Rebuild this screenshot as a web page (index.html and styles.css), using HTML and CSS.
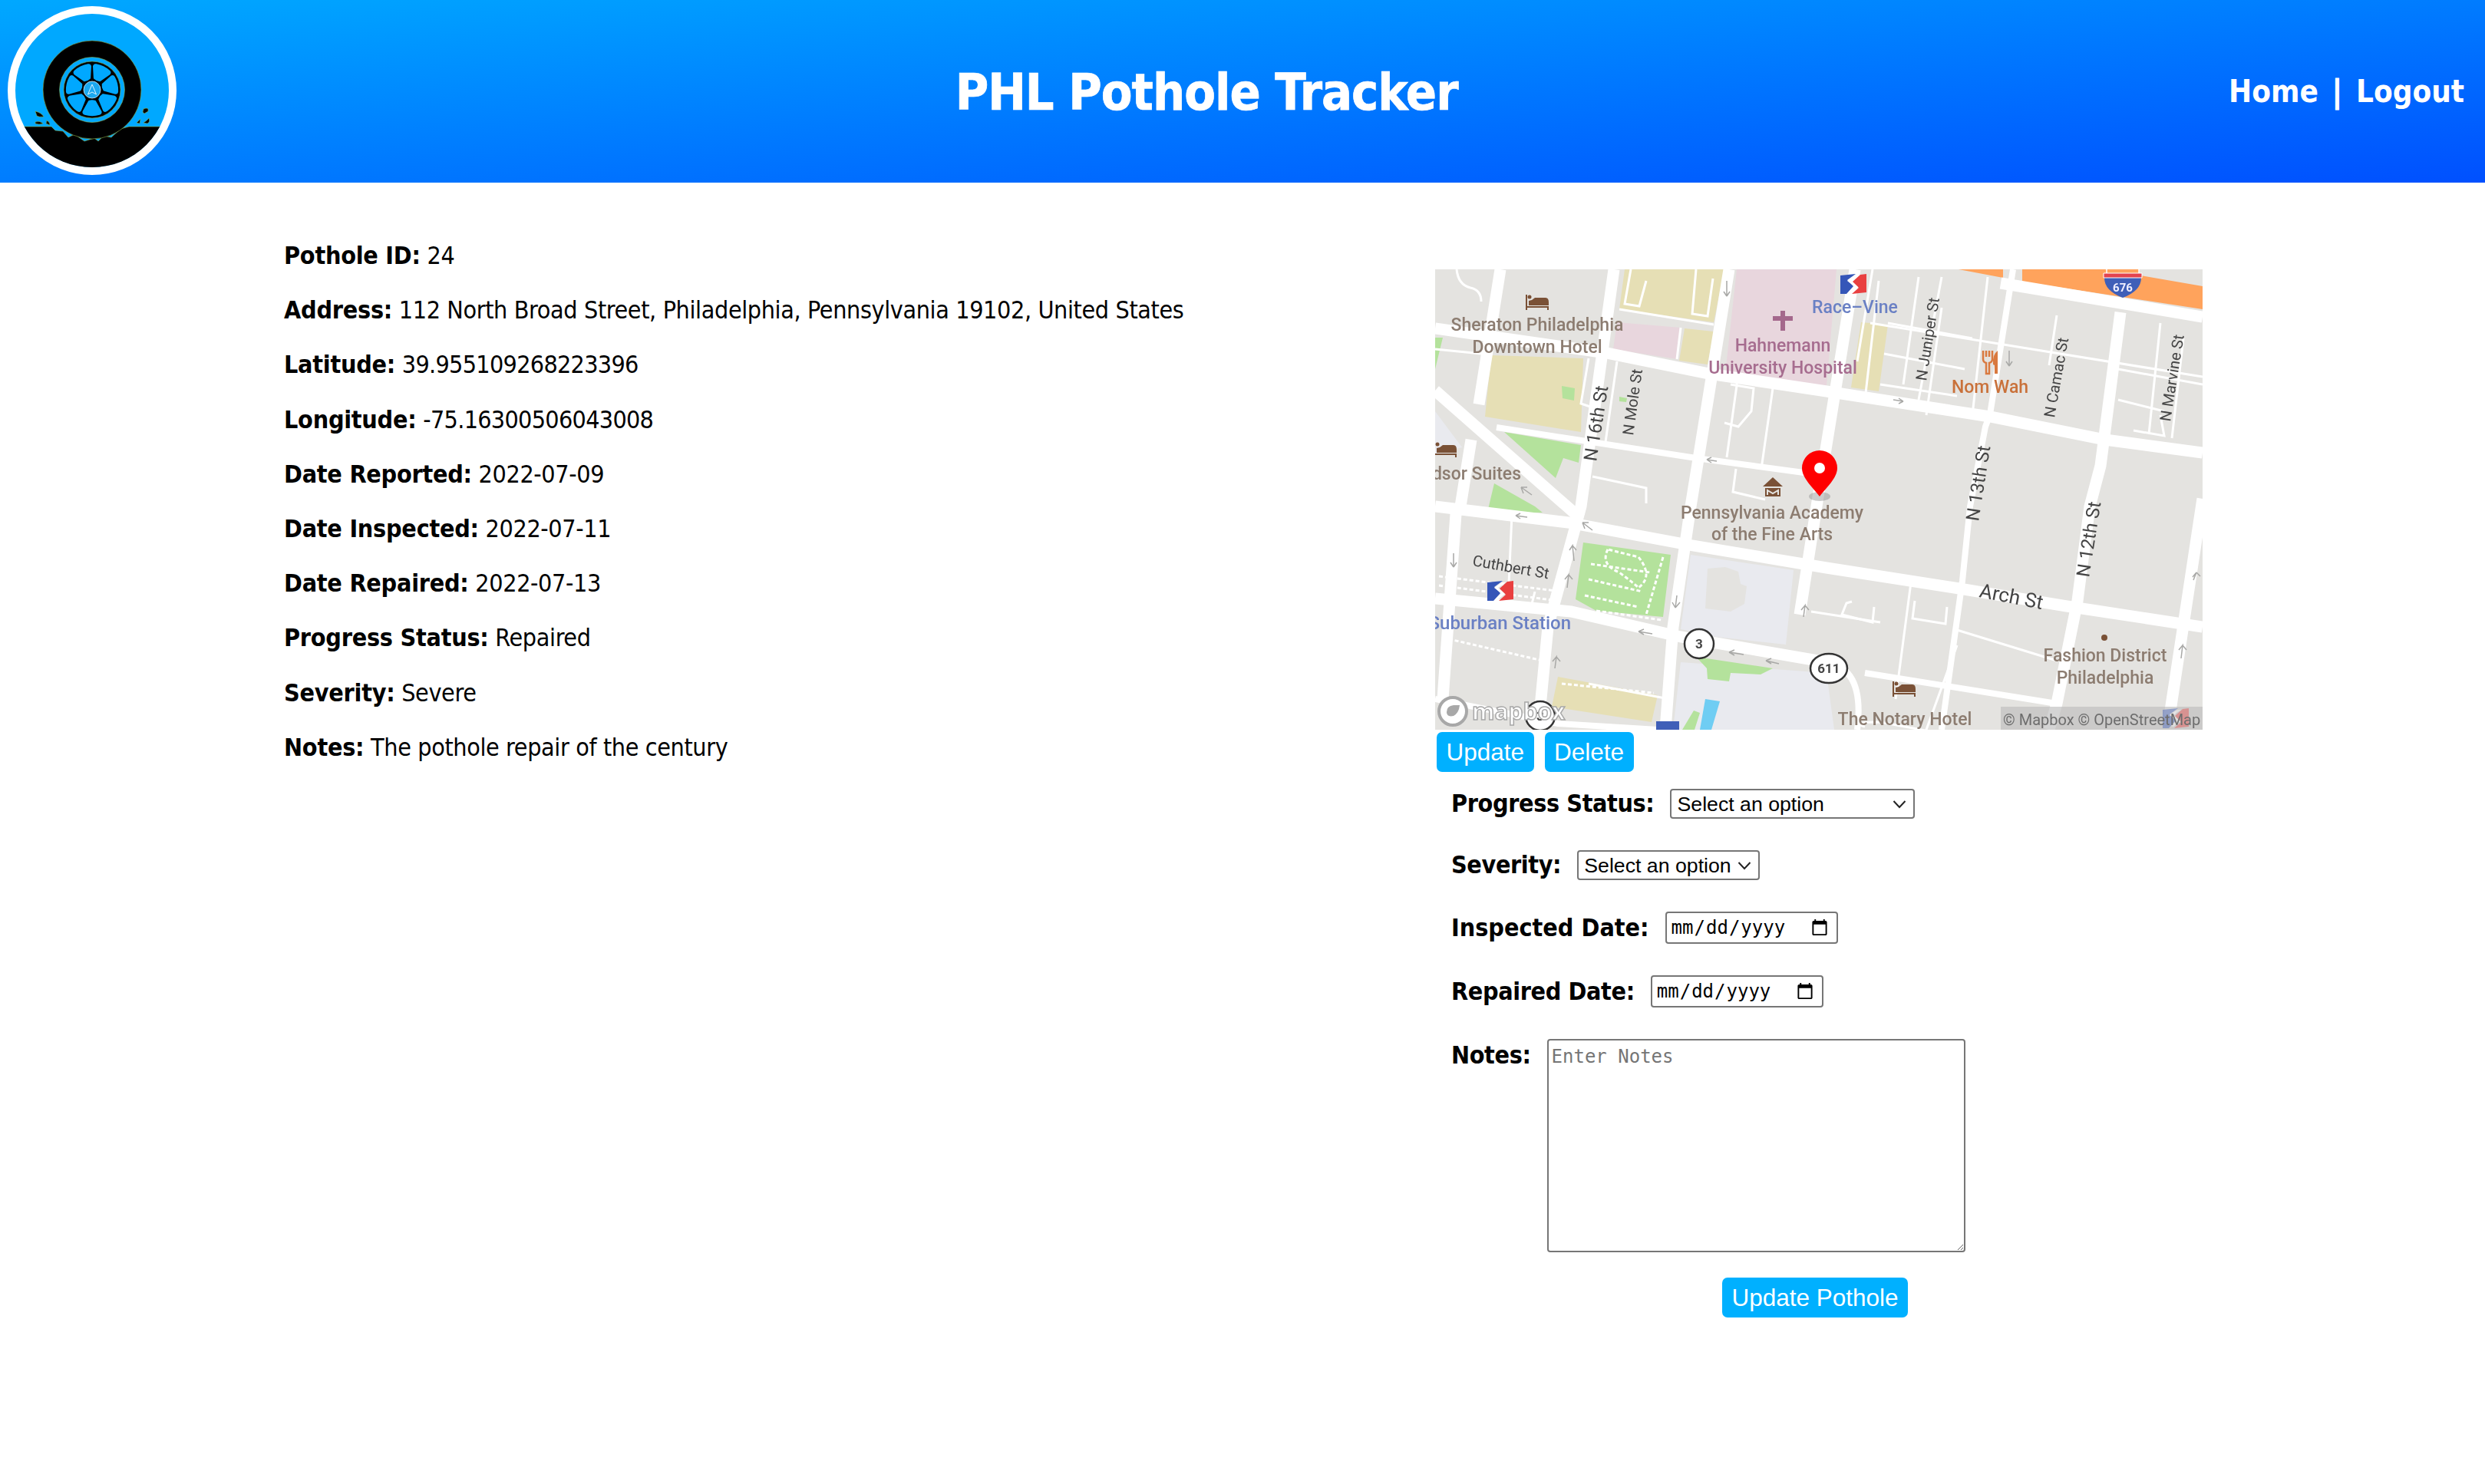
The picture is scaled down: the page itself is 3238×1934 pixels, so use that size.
FILE: index.html
```html
<!DOCTYPE html>
<html lang="en">
<head>
<meta charset="utf-8">
<title>PHL Pothole Tracker</title>
<link rel="stylesheet" href="styles.css">
</head>
<body>
<header class="site-header">
  <svg class="logo" viewBox="0 0 220 220" aria-label="logo">
    <defs>
      <clipPath id="logoClip"><circle cx="110" cy="110" r="100"/></clipPath>
      <path id="petal" d="M-4 15Q0 13.500 4 15L11.500 28.500Q12 31 9.500 31.800Q0 34.500-9.500 31.800Q-12 31-11.500 28.500Z"/>
    </defs>
    <circle cx="110" cy="110" r="105" class="logo-bg"/>
    <g clip-path="url(#logoClip)">
      <path class="logo-black" d="M0 157H57L62 162 72 163 79 171 87 167 100 176 113 172 118 176 125 169 135 171 147 160 158 157H220V220H0Z"/>
    </g>
    <circle cx="110" cy="109" r="64" class="logo-black"/>
    <circle cx="110" cy="109" r="42.500" class="logo-blue"/>
    <circle cx="110" cy="109" r="37" class="logo-black"/>
    <g class="logo-petal" transform="translate(110 109)">
      <use href="#petal"/><use href="#petal" transform="rotate(51.430)"/><use href="#petal" transform="rotate(102.860)"/><use href="#petal" transform="rotate(154.290)"/><use href="#petal" transform="rotate(205.710)"/><use href="#petal" transform="rotate(257.140)"/><use href="#petal" transform="rotate(308.570)"/>
    </g>
    <circle cx="110" cy="109" r="11" class="logo-hub"/>
    <path class="logo-arrow" d="M110 102L104.500 115 110 112 115.500 115Z"/>
    <g class="logo-black">
      <path d="M36 137Q44 139 47 144 41 145 38 143Z"/><path d="M36 151Q42 149 46 153 41 155 36 153Z"/><path d="M51 149Q55 151 55 155L50 153Z"/>
      <path d="M177 134Q184 131 183 137L178 140 176 138Z"/><path d="M168 152L173 147 172 153Z"/><path d="M177 152Q182 149 184 146 186 151 182 153Z"/>
    </g>
  </svg>
  <h1 class="site-title">PHL Pothole Tracker</h1>
  <nav class="site-nav"><a href="#">Home</a><span class="nav-sep">|</span><a href="#">Logout</a></nav>
</header>

<main class="page">
  <section class="details">
    <p><b>Pothole ID:</b> 24</p>
    <p><b>Address:</b> 112 North Broad Street, Philadelphia, Pennsylvania 19102, United States</p>
    <p><b>Latitude:</b> <span class="num">39.955109268223396</span></p>
    <p><b>Longitude:</b> <span class="num">-75.16300506043008</span></p>
    <p><b>Date Reported:</b> 2022-07-09</p>
    <p><b>Date Inspected:</b> 2022-07-11</p>
    <p><b>Date Repaired:</b> 2022-07-13</p>
    <p><b>Progress Status:</b> Repaired</p>
    <p><b>Severity:</b> Severe</p>
    <p><b>Notes:</b> The pothole repair of the century</p>
  </section>

  <section class="side">
    <svg class="map" viewBox="0 0 1000 600" aria-label="map">
      <defs>
        <g id="septa">
          <path class="septa-blue" d="M0 2L20 0 9 8 17 16 8 26 0 26Z"/>
          <path class="septa-red" d="M34 0V24L15 26 24 18 16 10 26 1Z"/>
          <path class="septa-white" d="M19 2L9 9 18 16 11 23 14 24 23 17 14 9 24 2Z"/>
        </g>
        <g id="bed">
          <path class="poi-line" d="M1 0V20M1 16H29V20"/>
          <circle cx="5" cy="3" r="2.500" class="poi-fill"/>
          <path class="poi-fill" d="M8 7L12 4H26Q30 4 30 10V14H4V8Z"/>
        </g>
      </defs>
      <rect class="land" width="1000" height="600"/>

      <!-- coloured areas -->
      <path class="tan" d="M73 112L193 116 190 212 65 192ZM247 0H377L363 69 240 52ZM325 77L363 81 355 124 318 119ZM555 69L590 72 578 159 542 154ZM160 531L290 555 282 590 152 570Z"/>
      <path class="pink" d="M237 69L320 76 315 117 232 104ZM393 0H523L510 151 377 145Z"/>
      <path class="motorway" d="M682 0H740V11ZM765 0H873L1000 22V52L765 16Z"/>
      <path class="green" d="M90 212L190 229 187 252 167 246 157 272ZM77 279L130 309 140 317H68ZM0 89L10 89 0 130ZM165 152L182 155 181 171 166 168ZM240 166L250 168 249 173 240 172ZM193 356L307 372 297 453 210 445 183 430Z"/>
      <path class="plaza" d="M333 372L467 392 457 489 367 479 320 469ZM320 512L510 526 520 600H310ZM0 185L35 232 0 240Z"/>
      <path class="land" d="M355 390L378 388 395 394 398 410 406 413 403 436 385 446 352 442Z"/>
      <path class="green" d="M340 505L440 520 424 528 385 526 383 537 355 534 354 520ZM322 600L337 575 345 578 338 600Z"/>
      <path class="water" d="M352 560L371 563 360 600H345Z"/>

      <!-- main roads -->
      <g class="road">
        <path d="M0 77L223 109 357 136 510 159 723 192 873 222 1000 239"/>
        <path d="M190 333L330 359 510 389 683 416 823 439 1000 466M0 309L190 332"/>
        <path d="M0 158L190 325"/>
        <path d="M233 0L190 309 147 466 137 570 130 600"/>
        <path d="M547 0L497 309 475 450"/>
        <path d="M383 0L333 309 310 466 300 600"/>
        <path d="M85 0L57 176M47 222L33 309 27 319 10 560"/>
        <path d="M893 56L867 256 853 309 837 432 810 566 800 600"/>
        <path d="M0 429L177 446 320 479 510 512"/>
        <path d="M1000 299L957 582"/>
        <path d="M737 18L1000 62"/>
      </g>
      <g class="road-mid">
        <path d="M80 206L340 246 510 269"/>
        <path d="M753 0L723 189 717 205 697 309 687 406 660 600"/>
        <path d="M560 526L810 566"/>
        <path d="M0 560L160 592 290 600"/>
        <path d="M510 512Q560 520 550 600"/>
      </g>
      <!-- alleys and lanes -->
      <g class="alley">
        <path d="M28 0Q30 20 46 24 60 27 60 42M0 104L60 110"/>
        <path d="M255 0L247 45 266 48 275 15M340 0L335 58 355 61 362 12"/>
        <path d="M240 52L363 72M320 76L315 117M200 116L190 175 205 180"/>
        <path d="M237 120L222 225M205 270L275 285 275 305"/>
        <path d="M395 137L380 245M377 200L395 205 412 185 415 155 385 150M392 260L388 290 430 300M440 155L425 260"/>
        <path d="M570 0L550 120 M578 15L560 170M567 70L1000 140"/>
        <path d="M590 70L700 90M585 110L690 130M580 150L680 165M660 10L630 170M630 10L610 150"/>
        <path d="M810 60L800 125M945 70L930 215M975 90L960 220M890 130L1000 150M890 170L950 185M910 210L950 217 945 190"/>
        <path d="M660 50L640 190M720 10L700 190"/>
        <path d="M543 433L536 435 530 450 570 460 572 440M625 432L622 455 665 462 667 440M620 408L600 560"/>
        <path d="M490 446L580 460M690 545L790 562M680 470L810 510"/>
        <path d="M680 490L640 600M560 596Q540 590 580 590L660 605"/>
        <path d="M100 320L96 410M130 420L125 440M200 540L305 560"/>
      </g>
      <g class="dash">
        <path d="M203 384L280 395 M200 404L270 420M195 425L265 440M210 445L295 457"/>
        <path d="M225 365Q215 385 240 395 260 410 265 415 285 400 265 375 245 370 225 365"/>
        <path d="M297 375L275 450M10 480L140 510M5 400L165 420M5 412L160 432M5 425L160 445"/>
        <path d="M165 540L285 552"/>
      </g>

      <!-- one-way arrows -->
      <g class="arrow">
        <path d="M380 35V15M380 35L376 29M380 35L384 29M112 284L126 294M112 284H120M112 284L115 292M354 248L367 250M354 248L360 245M354 248L360 252M597 170L610 172M610 172L604 168M610 172L604 175M748 106V126M748 126L744 120M748 126L752 120"/>
        <path d="M105 321L120 323M105 321L111 318M105 321L111 325M192 330L205 340M192 330H200M192 330L195 338M181 380L179 360 175 366M179 360L184 366M172 415L174 398 169 404M174 398L179 404M24 380V370M24 388V372M24 388L20 382M24 388L28 382M265 472L283 475M265 472L272 469M265 472L272 476M313 441L315 425M313 441L309 434M313 441L319 434M156 520L158 505 153 511M158 505L163 511M383 499L402 502M383 499L390 496M383 499L390 503M431 510L448 514M431 510L438 507M431 510L438 514M480 453L482 438 477 444M482 438L487 444M988 405L992 395 987 401M992 395L997 400M972 507L974 490 969 496M974 490L979 496"/>
      </g>

      <!-- point icons -->
      <use href="#bed" transform="translate(118 33)"/>
      <use href="#bed" transform="translate(-2 225)"/>
      <use href="#bed" transform="translate(596 537)"/>
      <use href="#septa" transform="translate(528 6)"/>
      <use href="#septa" transform="translate(68 406)"/>
      <path class="cross" d="M440 64H466M453 54V80"/>
      <g class="museum">
        <path d="M427 283L440 271 453 283ZM430 285H450V296H430Z"/>
        <path class="museum-m" d="M433 294V288L440 292 447 288V294"/>
      </g>
      <path class="food" d="M714 106V117Q714 121 718 122L718 136H722L722 122Q726 121 726 117V106M718 106V114M722 106V114"/>
      <path class="food-fill" d="M733 106Q726 111 727 124L729 125V136H733Z"/>
      <circle class="poi-fill" cx="872" cy="480" r="4"/>
      <path class="parking" d="M288 589H318V600H288Z"/>

      <!-- labels -->
      <g class="lbl lbl-poi">
        <text x="133" y="80">Sheraton Philadelphia</text>
        <text x="133" y="109">Downtown Hotel</text>
        <text x="439" y="325">Pennsylvania Academy</text>
        <text x="439" y="353">of the Fine Arts</text>
        <text x="612" y="594">The Notary Hotel</text>
        <text x="873" y="511">Fashion District</text>
        <text x="873" y="540">Philadelphia</text>
        <text class="lbl-end" x="112" y="274">Windsor Suites</text>
      </g>
      <g class="lbl lbl-health">
        <text x="453" y="107">Hahnemann</text>
        <text x="453" y="136">University Hospital</text>
      </g>
      <g class="lbl lbl-transit">
        <text x="547" y="57">Race–Vine</text>
        <text class="lbl-end lbl-station" x="177" y="469">Suburban Station</text>
      </g>
      <text class="lbl lbl-food" x="723" y="161">Nom Wah</text>
      <g class="street">
        <text transform="translate(210 251) rotate(-81)" class="street-lg">N 16th St</text>
        <text transform="translate(258 217) rotate(-82)">N Mole St</text>
        <text transform="translate(640 146) rotate(-81)">N Juniper St</text>
        <text transform="translate(807 194) rotate(-80)">N Camac St</text>
        <text transform="translate(958 199) rotate(-81)">N Marvine St</text>
        <text transform="translate(708 329) rotate(-81)" class="street-lg">N 13th St</text>
        <text transform="translate(852 402) rotate(-81)" class="street-lg">N 12th St</text>
        <text transform="translate(708 427) rotate(11)" class="street-xl">Arch St</text>
        <text transform="translate(48 386) rotate(10)">Cuthbert St</text>
      </g>

      <!-- route shields -->
      <g class="shield">
        <circle cx="344" cy="488" r="19"/>
        <circle cx="137" cy="582" r="19"/>
        <ellipse cx="513" cy="520" rx="24" ry="19"/>
      </g>
      <g class="shield-text">
        <text x="344" y="494">3</text>
        <text x="137" y="588">3</text>
        <text x="513" y="526">611</text>
      </g>
      <path class="i-top" d="M875-2H917V6H875Z"/>
      <path class="i-blue" d="M872 11H920Q920 28 896 37 872 28 872 11Z"/>
      <path class="i-red" d="M871 5H921V11H871Z"/>
      <text class="i-text" x="896" y="29">676</text>

      <!-- marker -->
      <ellipse class="pin-shadow" cx="501" cy="296" rx="14" ry="6"/>
      <path class="pin" d="M501 296C492 284 478 272 478 259A23 23 0 0 1 524 259C524 272 510 284 501 296Z"/>
      <circle class="pin-dot" cx="501" cy="259" r="7"/>

      <!-- map furniture -->
      <circle class="mb-circle" cx="23" cy="576" r="18"/>
      <path class="mb-mark" d="M15 577Q15 569 24 568 32 568 32 568 31 578 24 582 15 584 15 577Z"/>
      <text class="mb-text" x="48" y="587">mapbox</text>
      <rect class="attrib" x="737" y="570" width="263" height="30"/>
      <use class="septa-faint" href="#septa" transform="translate(948 572)"/>
      <text class="attrib-text" x="740" y="594">© Mapbox © OpenStreetMap</text>
    </svg>

    <div class="actions">
      <button type="button" class="btn">Update</button>
      <button type="button" class="btn">Delete</button>
    </div>

    <form class="update-form">
      <div class="field">
        <label for="progress">Progress Status:</label>
        <select id="progress" class="select-wide"><option>Select an option</option></select>
      </div>
      <div class="field">
        <label for="severity">Severity:</label>
        <select id="severity" class="select-narrow"><option>Select an option</option></select>
      </div>
      <div class="field">
        <label class="label-wide" for="inspected">Inspected Date:</label>
        <input id="inspected" type="date">
      </div>
      <div class="field">
        <label for="repaired">Repaired Date:</label>
        <input id="repaired" type="date">
      </div>
      <div class="field field-top">
        <label for="notes">Notes:</label>
        <textarea id="notes" placeholder="Enter Notes"></textarea>
      </div>
      <div class="form-submit">
        <button type="button" class="btn">Update Pothole</button>
      </div>
    </form>
  </section>
</main>
</body>
</html>
```
FILE: styles.css
```css
* { box-sizing: border-box; }
html, body { margin: 0; padding: 0; background: #fff; }
body {
  font-family: "DejaVu Sans", Verdana, sans-serif;
  font-stretch: condensed;
  font-size: 32px;
  color: #000;
}

/* header */
.site-header {
  height: 238px;
  display: flex;
  align-items: center;
  justify-content: space-between;
  padding: 0 27px 0 10px;
  background: linear-gradient(to bottom right, #00a8ff, #0050ff);
  color: #fff;
}
.logo { width: 220px; height: 220px; flex: none; margin-top: -2px; }
.logo-bg { fill: #00a8ff; stroke: #fff; stroke-width: 10; }
.logo-black { fill: #000; stroke: #8fae4a; stroke-width: .6; }
.logo-blue { fill: #00a8ff; stroke: #8fae4a; stroke-width: .6; }
.logo-petal { fill: #00a8ff; stroke: #00a8ff; stroke-width: 2; stroke-linejoin: round; }
.logo-hub { fill: #1ba8f0; stroke: #cdeeff; stroke-width: .8; }
.logo-arrow { fill: none; stroke: #d8f2ff; stroke-width: 1; }
.site-title {
  margin: 3px 0 0 10px;
  font-size: 66px;
  font-weight: 700;
  line-height: 1;
  letter-spacing: -1px;
  -webkit-text-stroke: .7px #fff;
}
.site-nav { display: flex; gap: 18px; font-size: 40px; font-weight: 700; }
.site-nav a { color: #fff; text-decoration: none; }
.nav-sep { display: block; -webkit-text-stroke: 1px #fff; }

/* page layout */
.page { display: flex; padding-left: 370px; }
.details { width: 1500px; flex: none; padding-top: 76px; letter-spacing: -.38px; }
.details p { margin: 0 0 32px; line-height: 39.200px; }
.details b { letter-spacing: -.25px; }
.details .num { letter-spacing: -.7px; }
.side { width: 1000px; flex: none; padding-top: 113px; }

/* map */
.map { display: block; width: 1000px; height: 600px; filter: blur(.5px); }
.land { fill: #e4e3e0; }
.tan { fill: #e6dfb5; }
.pink { fill: #e8d6dd; }
.motorway { fill: #ffa35c; }
.green { fill: #b4e29c; }
.plaza { fill: #e9eaef; }
.water { fill: #6fcdf3; }
.road, .road-mid, .alley, .dash, .arrow, .poi-line, .cross, .food { fill: none; }
.road { stroke: #fff; stroke-width: 15; }
.road-mid { stroke: #fff; stroke-width: 8; }
.alley { stroke: #fff; stroke-width: 3; }
.dash { stroke: #fff; stroke-width: 3; stroke-dasharray: 5 3; }
.arrow { stroke: #a8a8a6; stroke-width: 1.500; }
.poi-line { stroke: #7a5136; stroke-width: 2; }
.poi-fill { fill: #7a5136; }
.cross { stroke: #a4688c; stroke-width: 6; }
.museum { fill: #7a5136; }
.museum-m { fill: none; stroke: #e4e3e0; stroke-width: 2; }
.food { stroke: #d9793f; stroke-width: 2.500; }
.food-fill { fill: #d9793f; }
.parking { fill: #3f5fb8; }
.septa-blue { fill: #3556b8; }
.septa-red { fill: #e94040; }
.septa-white { fill: #fff; }
.septa-faint { opacity: .4; }

.lbl { font-family: Roboto, "Noto Sans", sans-serif; font-stretch: normal; font-size: 23px; font-weight: 500; text-anchor: middle; }
.lbl-end { text-anchor: end; }
.lbl-station { font-size: 24px; }
.lbl-poi { fill: #8c7c70; }
.lbl-health { fill: #a66c8f; }
.lbl-transit { fill: #6a80c4; }
.lbl-food { fill: #c9713a; }
.street { font-family: Roboto, "Noto Sans", sans-serif; font-stretch: normal; font-size: 20px; fill: #444; }
.street-lg { font-size: 24px; }
.street-xl { font-size: 26px; }
.shield { fill: #fff; stroke: #333; stroke-width: 2.500; }
.shield-text { font-family: Roboto, sans-serif; font-stretch: normal; font-size: 17px; font-weight: 700; fill: #444; text-anchor: middle; }
.i-top { fill: #ffa35c; stroke: #fff; stroke-width: 1.500; }
.i-blue { fill: #3f5fb8; }
.i-red { fill: #e3434e; stroke: #fff; stroke-width: 1; }
.i-text { font-family: Roboto, sans-serif; font-stretch: normal; font-size: 15px; font-weight: 700; fill: #eef; text-anchor: middle; }
.pin { fill: #f00; }
.pin-dot { fill: #fff; }
.pin-shadow { fill: #8f8f8f; opacity: .45; }
.mb-circle { fill: #fff; stroke: #a8a8a8; stroke-width: 4; }
.mb-mark { fill: #a8a8a8; }
.mb-text { font-family: "Open Sans", sans-serif; font-stretch: normal; font-size: 30px; font-weight: 700; fill: #fff; stroke: #a8a8a8; stroke-width: 1.500; }
.attrib { fill: #bdbdbd; opacity: .65; }
.attrib-text { font-family: Roboto, sans-serif; font-stretch: normal; font-size: 20px; fill: #6d6d6d; }

/* buttons */
.actions { display: flex; gap: 14px; padding: 3px 0 0 2px; }
.btn {
  height: 52px;
  padding: 0 12.500px;
  border: 0;
  border-radius: 7px;
  background: #00b0ff;
  color: #fff;
  font-family: "Liberation Sans", Arial, sans-serif;
  font-size: 31.500px;
}

/* form */
.update-form { width: 969px; padding: 22px 0 0 21px; }
.field { display: flex; align-items: center; gap: 21px; margin-bottom: 41px; letter-spacing: -.38px; }
.field label { font-weight: 700; line-height: 39px; }
.field .label-wide { letter-spacing: 0; }
.field-top { align-items: flex-start; margin-bottom: 33px; }
.field-top label { margin-top: 2px; }
select {
  appearance: none;
  height: 39px;
  padding: 0 30px 0 7px;
  font-family: "Liberation Sans", Arial, sans-serif;
  font-size: 26.700px;
  letter-spacing: 0;
  color: #000;
  background: #fff url("data:image/svg+xml,%3Csvg xmlns='http://www.w3.org/2000/svg' width='18' height='12' viewBox='0 0 18 12'%3E%3Cpath d='M1.500 2L9 10l7.500-8' fill='none' stroke='%23222' stroke-width='2'/%3E%3C/svg%3E") no-repeat right 9px center;
  border: 2px solid #767676;
  border-radius: 4px;
}
.select-wide { width: 319px; }
.select-narrow { width: 238px; }
input[type="date"] {
  width: 225px;
  height: 42px;
  padding: 2px 8px 2px 5px;
  font-family: "DejaVu Sans Mono", monospace;
  font-stretch: normal;
  font-size: 24px;
  letter-spacing: 0;
  border: 2px solid #767676;
  border-radius: 4px;
}
textarea {
  width: 545px;
  height: 278px;
  padding: 7px 4px 4px 4px;
  font-family: "DejaVu Sans Mono", monospace;
  font-stretch: normal;
  font-size: 24px;
  letter-spacing: 0;
  border: 2px solid #767676;
  border-radius: 4px;
}
.form-submit { display: flex; justify-content: center; }
```
